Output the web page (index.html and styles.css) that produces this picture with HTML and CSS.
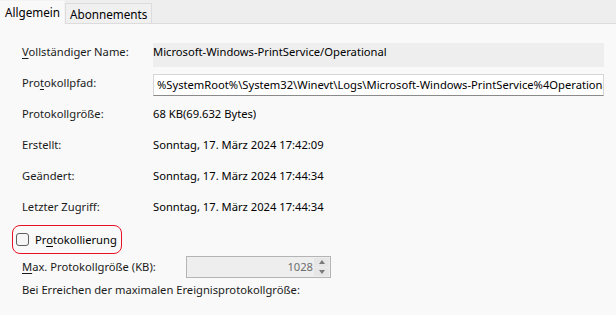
FILE: index.html
```html
<!DOCTYPE html>
<html>
<head>
  <meta charset="utf-8">
  <link rel="stylesheet" href="styles.css">
</head>
<body>
<div class="tabs">
  <div class="tab active">Allgemein</div>
  <div class="tab">Abonnements</div>
</div>
<div class="page">
  <div class="row">
    <div class="label"><u>V</u>ollständiger Name:</div>
    <div class="value readonly">Microsoft-Windows-PrintService/Operational</div>
  </div>
  <div class="row">
    <div class="label">Pro<u>t</u>okollpfad:</div>
    <div class="value field">%SystemRoot%\System32\Winevt\Logs\Microsoft-Windows-PrintService%4Operational.evtx</div>
  </div>
  <div class="row">
    <div class="label">Protokollgröße:</div>
    <div class="value">68 KB(69.632 Bytes)</div>
  </div>
  <div class="row">
    <div class="label">Erstellt:</div>
    <div class="value">Sonntag, 17. März 2024 17:42:09</div>
  </div>
  <div class="row">
    <div class="label">Geändert:</div>
    <div class="value">Sonntag, 17. März 2024 17:44:34</div>
  </div>
  <div class="row">
    <div class="label">Letzter Zugriff:</div>
    <div class="value">Sonntag, 17. März 2024 17:44:34</div>
  </div>

  <div class="check-row">
    <label class="check-mark">
      <span class="box"></span>
      <span>Pr<u>o</u>tokollierung</span>
    </label>
  </div>

  <div class="size-row">
    <div class="label"><u>M</u>ax. Protokollgröße (KB):</div>
    <div class="spin">
      <span class="spin-value">1028</span>
      <span class="spin-buttons">
        <span class="arrow up"></span>
        <span class="arrow down"></span>
      </span>
    </div>
  </div>
  <div class="note">Bei Erreichen der maximalen Ereignisprotokollgröße:</div>
</div>
</body>
</html>
```

FILE: styles.css
```css
body {
  margin: 0;
  background: #f9f9f9;
  color: #1a1a1a;
  font-family: "Noto Sans", "Open Sans", sans-serif;
  font-size: 11.2px;
  line-height: 16px;
  -webkit-font-smoothing: antialiased;
}

u {
  text-decoration-thickness: 1px;
  text-underline-offset: 2px;
}

.tabs {
  display: flex;
  align-items: flex-end;
  height: 23px;
  background: #eeeeee;
  border-bottom: 1px solid #dcdcdc;
}

.tab {
  box-sizing: border-box;
  height: 20px;
  padding: 2px 4px 0;
  background: #f0f0f0;
  border: 1px solid #dcdcdc;
  border-bottom: 0;
  color: #000;
  font-size: 11.7px;
}

.tab.active {
  margin-bottom: -1px;
  height: 24px;
  padding: 3px 4px 0 5px;
  background: #f9f9f9;
  border-color: #f3f3f3;
  border-left: 0;
}

.page {
  padding: 12px 12px 0 22px;
}

.row {
  display: flex;
  align-items: center;
  height: 31px;
}

.label {
  width: 131px;
  flex: none;
}

.value {
  color: #000;
  white-space: nowrap;
  overflow: hidden;
}

.value.readonly {
  align-self: flex-start;
  box-sizing: border-box;
  width: 452px;
  height: 24px;
  margin-top: 7px;
  padding: 1px 0 0 0;
  background: #eeeeee;
}

.row:first-child .label {
  align-self: flex-start;
  margin-top: 8px;
}

.value.field {
  align-self: flex-start;
  box-sizing: border-box;
  width: 452px;
  height: 22px;
  margin-top: 7px;
  padding: 2px 3px 0;
  background: #fff;
  border: 1px solid #d6d6d6;
  border-bottom-color: #8a8a8a;
}

.check-row {
  display: flex;
  margin: 3px 0 0 -10px;
}

.check-mark {
  display: flex;
  align-items: center;
  gap: 6px;
  height: 27px;
  padding: 0 4px 0 3px;
  border: 1px solid #e81123;
  border-radius: 8px;
  color: #000;
}

.box {
  box-sizing: border-box;
  width: 13px;
  height: 13px;
  border: 1px solid #5f5f5f;
  border-radius: 3px;
  background: #f6f6f6;
}

.size-row {
  display: flex;
  align-items: center;
  height: 22px;
  margin-top: 2px;
}

.size-row .label {
  width: 164px;
}

.spin {
  display: flex;
  box-sizing: border-box;
  width: 145px;
  height: 22px;
  background: #eeeeee;
  border: 1px solid #b4b4b4;
}

.spin-value {
  flex: 1;
  text-align: right;
  padding: 2px 1px 0 0;
  color: #6d6d6d;
}

.spin-buttons {
  display: flex;
  flex-direction: column;
  width: 15px;
  margin: 1px 1px 1px 0;
  gap: 1px;
}

.arrow {
  flex: 1;
  display: flex;
  align-items: center;
  justify-content: center;
  background: #e6e6e6;
}

.arrow::after {
  content: "";
  border-left: 3px solid transparent;
  border-right: 3px solid transparent;
}

.arrow.up::after {
  border-bottom: 4px solid #7a7a7a;
}

.arrow.down::after {
  border-top: 4px solid #7a7a7a;
}

.note {
  margin-top: 2px;
  height: 20px;
  line-height: 20px;
}
```
